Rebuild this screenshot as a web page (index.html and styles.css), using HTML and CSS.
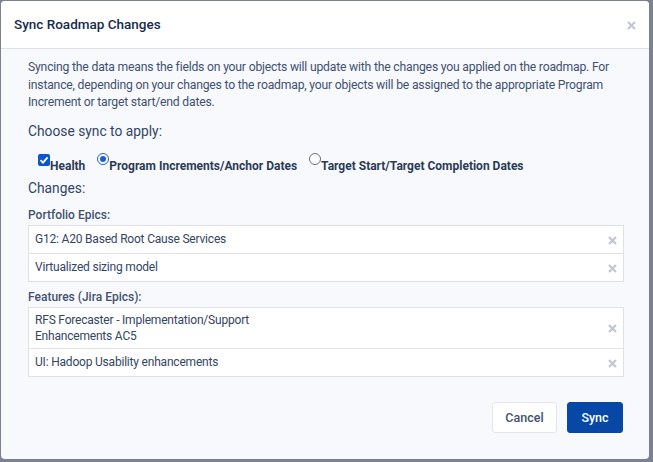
FILE: index.html
```html
<!DOCTYPE html>
<html>
<head>
<meta charset="utf-8">
<link rel="stylesheet" href="styles.css">
</head>
<body>
<div class="modal">
  <div class="header">
    <h1 class="title">Sync Roadmap Changes</h1>
    <svg class="close" width="9" height="9" viewBox="0 0 9 9"><path d="M1 1 L8 8 M8 1 L1 8" stroke="#c1c7d0" stroke-width="2.2"/></svg>
  </div>
  <div class="body">
    <p class="intro">Syncing the data means the fields on your objects will update with the changes you applied on the roadmap. For instance, depending on your changes to the roadmap, your objects will be assigned to the appropriate Program Increment or target start/end dates.</p>
    <h2 class="section">Choose sync to apply:</h2>
    <div class="options">
      <label class="opt"><span class="check"><svg width="12" height="12" viewBox="0 0 12 12"><rect width="12" height="12" rx="2" fill="#0b57d0"/><path d="M2.5 6.2 L5 8.6 L9.6 3.4" stroke="#fff" stroke-width="1.8" fill="none"/></svg></span><span class="opt-label">Health</span></label>
      <label class="opt"><span class="radio on"></span><span class="opt-label">Program Increments/Anchor Dates</span></label>
      <label class="opt"><span class="radio"></span><span class="opt-label">Target Start/Target Completion Dates</span></label>
    </div>
    <h2 class="section changes">Changes:</h2>
    <div class="group-label">Portfolio Epics:</div>
    <div class="list">
      <div class="item"><span class="item-text">G12: A20 Based Root Cause Services</span><svg class="remove" width="9" height="9" viewBox="0 0 9 9"><path d="M1 1 L8 8 M8 1 L1 8" stroke="#c1c7d0" stroke-width="2.2"/></svg></div>
      <div class="item"><span class="item-text">Virtualized sizing model</span><svg class="remove" width="9" height="9" viewBox="0 0 9 9"><path d="M1 1 L8 8 M8 1 L1 8" stroke="#c1c7d0" stroke-width="2.2"/></svg></div>
    </div>
    <div class="group-label">Features (Jira Epics):</div>
    <div class="list">
      <div class="item"><span class="item-text">RFS Forecaster - Implementation/Support<br>Enhancements AC5</span><svg class="remove" width="9" height="9" viewBox="0 0 9 9"><path d="M1 1 L8 8 M8 1 L1 8" stroke="#c1c7d0" stroke-width="2.2"/></svg></div>
      <div class="item"><span class="item-text">UI: Hadoop Usability enhancements</span><svg class="remove" width="9" height="9" viewBox="0 0 9 9"><path d="M1 1 L8 8 M8 1 L1 8" stroke="#c1c7d0" stroke-width="2.2"/></svg></div>
    </div>
    <div class="footer">
      <button class="btn cancel">Cancel</button>
      <button class="btn primary">Sync</button>
    </div>
  </div>
</div>
</body>
</html>
```

FILE: styles.css
```css
html, body {
  margin: 0;
  padding: 0;
  height: 462px;
  overflow: hidden;
}
body {
  background: #7b8191;
  font-family: Roboto, "Noto Sans", sans-serif;
  color: #344563;
  padding: 1px 4px 3px 1px;
  box-sizing: border-box;
  width: 653px;
}
.modal {
  height: 458px;
  background: #f7f9fd;
  border-radius: 4px;
  overflow: hidden;
  display: flex;
  flex-direction: column;
}
.header {
  background: #fff;
  height: 47px;
  border-bottom: 1px solid #dfe1e6;
  display: flex;
  align-items: center;
  justify-content: space-between;
  padding: 0 13px 0 13px;
}
.title {
  margin: 0 0 2px 0;
  font-size: 13.5px;
  font-weight: 500;
  color: #172b4d;
}
.close {
  display: block;
  margin-top: 1px;
}
.body {
  padding: 10px 27px 0 27px;
  display: flex;
  flex-direction: column;
  flex: 1;
}
.intro {
  margin: 0;
  font-size: 12.2px;
  letter-spacing: -0.2px;
  line-height: 17.5px;
  color: #42526e;
}
.section {
  margin: 9px 0 0 0;
  font-size: 13.8px;
  font-weight: 400;
  color: #344563;
  line-height: 20px;
}
.options {
  display: flex;
  gap: 12px;
  margin: 12px 0 0 10px;
  height: 20px;
}
.opt {
  display: flex;
  align-items: flex-start;
}
.opt-label {
  font-size: 12px;
  font-weight: 700;
  color: #2c3b56;
  margin-top: 6px;
}
.check {
  width: 12px;
  height: 12px;
  margin-top: 1px;
  display: flex;
}
.radio {
  width: 10px;
  height: 10px;
  border: 1px solid #6b6f78;
  border-radius: 50%;
  background: #fff;
  margin-top: 0;
  box-sizing: content-box;
  position: relative;
}
.radio.on {
  border-color: #1a5fd6;
}
.radio.on::after {
  content: "";
  position: absolute;
  left: 2px;
  top: 2px;
  width: 6px;
  height: 6px;
  border-radius: 50%;
  background: #1a5fd6;
}
.changes {
  margin-top: 5px;
  margin-bottom: 2px;
}
.group-label {
  font-size: 12px;
  color: #42526e;
  font-weight: 500;
  margin-top: 7px;
  line-height: 16px;
}
.list {
  margin-top: 2px;
  width: 596px;
  box-sizing: border-box;
  border: 1px solid #dfe1e6;
  background: #fff;
}
.item {
  display: flex;
  align-items: center;
  justify-content: space-between;
  box-sizing: border-box;
  min-height: 27px;
  padding: 4px 6px 4px 6px;
  font-size: 12px;
  letter-spacing: -0.2px;
  line-height: 16px;
  color: #344563;
}
.item + .item {
  border-top: 1px solid #dfe1e6;
  min-height: 28px;
}
.remove {
  display: block;
  margin-top: 2px;
}
.footer {
  display: flex;
  justify-content: flex-end;
  gap: 10px;
  margin-top: 25px;
  margin-right: -1px;
}
.btn {
  font-family: Roboto, "Noto Sans", sans-serif;
  font-size: 12.5px;
  height: 31px;
  border-radius: 3px;
  padding: 0;
  cursor: pointer;
}
.cancel {
  background: #fff;
  border: 1px solid #e4e6ea;
  color: #42526e;
  font-weight: 500;
  width: 65px;
}
.primary {
  background: #0747a6;
  border: 1px solid #0747a6;
  color: #fff;
  width: 56px;
  font-weight: 500;
}
```
